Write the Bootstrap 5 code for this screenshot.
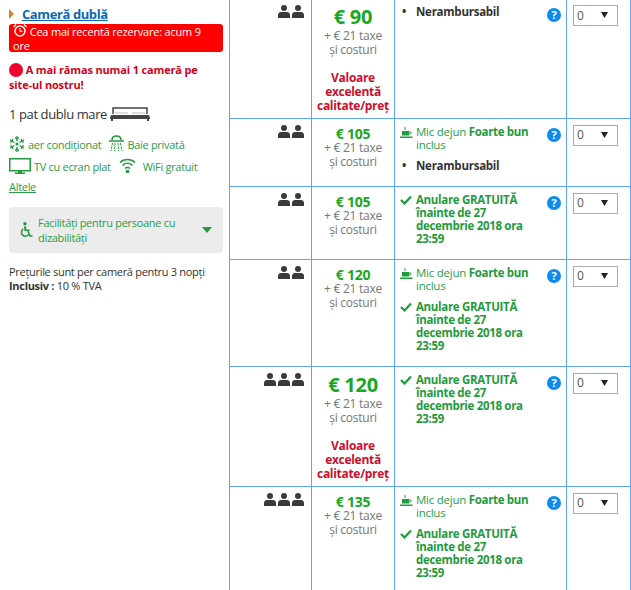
<!DOCTYPE html>
<html lang="ro">
<head>
<meta charset="utf-8">
<title>Camere</title>
<link rel="stylesheet" href="https://cdn.jsdelivr.net/npm/bootstrap@5.3.0/dist/css/bootstrap.min.css">
<style>
html,body{height:590px;overflow:hidden;background:#fff}
body{font-family:"Open Sans","Noto Sans",sans-serif;font-size:11.5px;line-height:14px;color:#333;letter-spacing:-.25px}
.shell{width:631px;height:590px;overflow:hidden}
.side{width:229px;flex:none;padding:6px 6px 0 9px;font-size:11px;letter-spacing:-.3px}
.room-head{font-size:13px;line-height:16px;font-weight:700;height:18px;letter-spacing:-.4px}
.room-head a{color:#0a6ab5;margin-left:5px}
.caret-o{display:inline-block;border-left:5px solid #d9822b;border-top:5px solid transparent;border-bottom:5px solid transparent}
.urgent{background:#f00;color:#fff;border-radius:3px;padding:0 14px 0 4px;width:214px;height:28px;letter-spacing:-.2px}
.urgent svg{vertical-align:-1px}
.left-one{color:#d0021b;font-weight:700;margin-top:10px;letter-spacing:-.15px;line-height:15px}
.dot{display:inline-block;width:14px;height:14px;border-radius:50%;background:#f0002f;vertical-align:-3px}
.bedline{font-size:13px;margin-top:10px;height:24px;display:flex;align-items:center;gap:3px;letter-spacing:-.4px}
.fac{color:#2a9d4a;height:22px;display:flex;align-items:flex-end;gap:3px;white-space:nowrap}
.fac-a{margin-top:4px}
.fac-gap{margin-left:5px}
.more{color:#2a9d4a;display:inline-block;margin-top:6px}
.access{background:#ececec;border-radius:3px;width:214px;height:46px;margin-top:13px;color:#2a9d4a;padding:0 11px}
.access span.lbl{width:150px;line-height:15px}
.tri{border-top:6px solid #1f9a3d;border-left:5px solid transparent;border-right:5px solid transparent}
.note{margin-top:12px}
.offers{width:402px;flex:none;table-layout:fixed;border-collapse:collapse;margin:0}
.offers td{border:1px solid #5fa8f0;border-top:0;padding:0;vertical-align:top;background:transparent;color:#333;box-shadow:none}
.offers tr:last-child td{border-bottom:0}
.c-occ{width:82px;padding:6px 7px 0 0!important}
.occ-row{display:flex;justify-content:flex-end;gap:2px}
.c-price{width:83px;text-align:center}
.c-cond{width:172px;padding:6px 5px 0 5px!important}
.c-qty{padding:6px 0 0 6px!important}
.r1 td{padding-top:5px!important}
.r1 .c-price{padding-top:0!important}
.price{color:#1aa81f;font-weight:700;font-size:14px;line-height:15px;padding-top:7px}
.price-big{font-size:20px;line-height:24px;padding-top:6px}
.r1 .price-big{padding-top:5px}
.fees{color:#777;font-size:12px;letter-spacing:-.25px;line-height:14px}
.value{color:#c8102e;font-weight:700;margin-top:14px;line-height:14px;font-size:12px;letter-spacing:-.3px}
.cond-row{display:flex;justify-content:space-between}
.cond-list{width:134px}
.g-item{display:flex;color:#2a9d4a;line-height:13px}
.g-item .ico{width:16px;flex:none}
.g-item b{font-weight:700;color:#1f9a3d;letter-spacing:-.32px}
.g-item + .g-item{margin-top:8px}
.nonref{display:flex;font-weight:700;color:#333;line-height:13px}
.nonref .ico{width:16px;flex:none;padding-left:2px}
.g-item + .nonref{margin-top:8px}
.help{width:14px;height:14px;border-radius:50%;background:#0d8cf0;color:#fff;font-size:11px;line-height:14px;text-align:center;font-weight:700;margin:3px 0 0 0;flex:none;letter-spacing:0}
.qty{width:45px;height:21px;padding:0 0 0 3px;border:1px solid #aaa;border-radius:0;font-size:12px;color:#555;background-position:right 9px top 6px;background-size:7px 6px;background-image:url("data:image/svg+xml,%3Csvg xmlns='http://www.w3.org/2000/svg' viewBox='0 0 7 6'%3E%3Cpath d='M0 0h7L3.500 6z' fill='%23222'/%3E%3C/svg%3E");font-family:inherit}
tr.r1{height:118px}
tr.r2{height:68px}
tr.r3{height:73px}
tr.r4{height:107px}
tr.r5{height:120px}
tr.r6{height:110px}
</style>
</head>
<body>
<svg width="0" height="0" class="position-absolute">
<defs>
<symbol id="p" viewBox="0 0 12 13"><circle cx="6" cy="3" r="3" fill="#3a3a3a"/><path d="M0 13V10C0 8 1.500 7 3 7h6c1.500 0 3 1 3 3V13z" fill="#3a3a3a"/></symbol>
<symbol id="chk" viewBox="0 0 12 10"><path d="M1 5l3.500 3.500L11 1.500" fill="none" stroke="#1f9a3d" stroke-width="2.200"/></symbol>
<symbol id="cup" viewBox="0 0 13 13"><path d="M2 5h7v4.500H2z" fill="#1f9a3d"/><path d="M9 6h1.500c1 0 1 2-.5 2H9" fill="none" stroke="#1f9a3d"/><path d="M0 10.500h12.500V12H0z" fill="#1f9a3d"/><path d="M5 1c-1 1 1 1.500 0 3" fill="none" stroke="#1f9a3d"/></symbol>
</defs>
</svg>
<div class="shell d-flex">
<div class="side">
  <div class="room-head"><span class="caret-o"></span> <a href="#">Cameră dublă</a></div>
  <div class="urgent"><svg width="14" height="13" viewBox="0 0 14 13"><circle cx="7" cy="7" r="5" fill="none" stroke="#fff" stroke-width="1.500"/><path d="M7 4v3.300h2.500" fill="none" stroke="#fff"/><path d="M0.500 3L3 0.500M13.500 3L11 0.500" stroke="#fff" stroke-width="1.500"/></svg> Cea mai recentă rezervare: acum 9 ore</div>
  <div class="left-one"><span class="dot"></span> A mai rămas numai 1 cameră pe site-ul nostru!</div>
  <div class="bedline">1 pat dublu mare
    <svg width="40" height="14" viewBox="0 0 40 14"><path d="M3 7V1h34v6" fill="none" stroke="#444" stroke-width="1.500"/><path d="M1 8h38l1 3H0z" fill="#444"/><path d="M0 11h40v1H0zM1 12h2v2H1zM37 12h2v2h-2z" fill="#444"/><path d="M5 7h13v-2H5zM22 7h13v-2H22z" fill="#ddd"/></svg>
  </div>
  <div class="fac fac-a">
    <svg width="16" height="16" viewBox="0 0 16 16"><g fill="none" stroke="#1f9a3d" stroke-width="1.300"><path d="M8 0v5M8 11v5M1 4l4.400 2.500M10.600 9.500L15 12M15 4l-4.400 2.500M5.400 9.500L1 12"/><path d="M6 1.500L8 3l2-1.500M6 14.500L8 13l2 1.500M1.200 6.500L3.500 5.300 3.300 2.800M14.800 9.500l-2.300 1.200.2 2.500M14.800 6.500l-2.300-1.200.2-2.500M1.200 9.500l2.300 1.200-.2 2.500"/></g><circle cx="8" cy="8" r="1.600" fill="#1f9a3d"/></svg>
    <span>aer condiționat</span>
    <svg class="fac-gap" width="15" height="17" viewBox="0 0 15 17"><path d="M3 5C3 2 5 1 7.500 1S12 2 12 5" fill="none" stroke="#1f9a3d" stroke-width="1.600"/><path d="M0 6h15" stroke="#1f9a3d" stroke-width="1.500"/><path d="M3.500 8l-1.500 8M6 8l-.5 8M9 8l.5 8M11.500 8l1.500 8" stroke="#1f9a3d" stroke-dasharray="2.500 1"/></svg>
    <span>Baie privată</span>
  </div>
  <div class="fac">
    <svg width="22" height="16" viewBox="0 0 22 16"><rect x=".75" y=".75" width="20.500" height="12" fill="none" stroke="#1f9a3d" stroke-width="1.500"/><path d="M9 13h4v1.500h3V16H6v-1.500h3z" fill="#1f9a3d"/></svg>
    <span>TV cu ecran plat</span>
    <svg class="fac-gap" width="17" height="16" viewBox="0 0 17 16"><path d="M1 4.500c4-4 11-4 15 0M3.500 7.500c3-3 7-3 10 0M6 10.500c1.500-1.500 3.500-1.500 5 0" fill="none" stroke="#1f9a3d" stroke-width="1.500"/><circle cx="8.500" cy="13.500" r="1.800" fill="#1f9a3d"/></svg>
    <span class="ms-1">WiFi gratuit</span>
  </div>
  <a class="more" href="#">Altele</a>
  <div class="access d-flex align-items-center">
    <svg width="14" height="16" viewBox="0 0 14 16"><circle cx="5" cy="1.800" r="1.700" fill="#1f9a3d"/><path d="M4 4.500h2.200v3h3.300v1.500H4.500z" fill="#1f9a3d"/><path d="M3.300 6.800A4 4 0 1 0 9 12" fill="none" stroke="#1f9a3d" stroke-width="1.500"/><path d="M8 9l2 5h2.500" fill="none" stroke="#1f9a3d" stroke-width="1.500"/></svg>
    <span class="lbl flex-grow-1 ms-1">Facilități pentru persoane cu dizabilități</span>
    <span class="tri"></span>
  </div>
  <div class="note">Prețurile sunt per cameră pentru 3 nopți<br><b>Inclusiv :</b> 10 % TVA</div>
</div>
<table class="table offers">
<tbody>
<tr class="r1">
  <td class="c-occ"><div class="occ-row"><svg width="12" height="13"><use href="#p"/></svg><svg width="12" height="13"><use href="#p"/></svg></div></td>
  <td class="c-price"><div class="price price-big">€ 90</div><div class="fees">+ € 21 taxe<br>și costuri</div><div class="value">Valoare excelentă calitate/preț</div></td>
  <td class="c-cond"><div class="cond-row"><div class="cond-list"><div class="nonref"><span class="ico">•</span><span>Nerambursabil</span></div></div><span class="help">?</span></div></td>
  <td class="c-qty"><select class="form-select qty" aria-label="Număr"><option>0</option></select></td>
</tr>
<tr class="r2">
  <td class="c-occ"><div class="occ-row"><svg width="12" height="13"><use href="#p"/></svg><svg width="12" height="13"><use href="#p"/></svg></div></td>
  <td class="c-price"><div class="price">€ 105</div><div class="fees">+ € 21 taxe<br>și costuri</div></td>
  <td class="c-cond"><div class="cond-row"><div class="cond-list"><div class="g-item"><span class="ico"><svg width="13" height="13"><use href="#cup"/></svg></span><span>Mic dejun <b>Foarte bun</b> inclus</span></div><div class="nonref"><span class="ico">•</span><span>Nerambursabil</span></div></div><span class="help">?</span></div></td>
  <td class="c-qty"><select class="form-select qty" aria-label="Număr"><option>0</option></select></td>
</tr>
<tr class="r3">
  <td class="c-occ"><div class="occ-row"><svg width="12" height="13"><use href="#p"/></svg><svg width="12" height="13"><use href="#p"/></svg></div></td>
  <td class="c-price"><div class="price">€ 105</div><div class="fees">+ € 21 taxe<br>și costuri</div></td>
  <td class="c-cond"><div class="cond-row"><div class="cond-list"><div class="g-item"><span class="ico"><svg width="12" height="10"><use href="#chk"/></svg></span><b>Anulare GRATUITĂ înainte de 27 decembrie 2018 ora 23:59</b></div></div><span class="help">?</span></div></td>
  <td class="c-qty"><select class="form-select qty" aria-label="Număr"><option>0</option></select></td>
</tr>
<tr class="r4">
  <td class="c-occ"><div class="occ-row"><svg width="12" height="13"><use href="#p"/></svg><svg width="12" height="13"><use href="#p"/></svg></div></td>
  <td class="c-price"><div class="price">€ 120</div><div class="fees">+ € 21 taxe<br>și costuri</div></td>
  <td class="c-cond"><div class="cond-row"><div class="cond-list"><div class="g-item"><span class="ico"><svg width="13" height="13"><use href="#cup"/></svg></span><span>Mic dejun <b>Foarte bun</b> inclus</span></div><div class="g-item"><span class="ico"><svg width="12" height="10"><use href="#chk"/></svg></span><b>Anulare GRATUITĂ înainte de 27 decembrie 2018 ora 23:59</b></div></div><span class="help">?</span></div></td>
  <td class="c-qty"><select class="form-select qty" aria-label="Număr"><option>0</option></select></td>
</tr>
<tr class="r5">
  <td class="c-occ"><div class="occ-row"><svg width="12" height="13"><use href="#p"/></svg><svg width="12" height="13"><use href="#p"/></svg><svg width="12" height="13"><use href="#p"/></svg></div></td>
  <td class="c-price"><div class="price price-big">€ 120</div><div class="fees">+ € 21 taxe<br>și costuri</div><div class="value">Valoare excelentă calitate/preț</div></td>
  <td class="c-cond"><div class="cond-row"><div class="cond-list"><div class="g-item"><span class="ico"><svg width="12" height="10"><use href="#chk"/></svg></span><b>Anulare GRATUITĂ înainte de 27 decembrie 2018 ora 23:59</b></div></div><span class="help">?</span></div></td>
  <td class="c-qty"><select class="form-select qty" aria-label="Număr"><option>0</option></select></td>
</tr>
<tr class="r6">
  <td class="c-occ"><div class="occ-row"><svg width="12" height="13"><use href="#p"/></svg><svg width="12" height="13"><use href="#p"/></svg><svg width="12" height="13"><use href="#p"/></svg></div></td>
  <td class="c-price"><div class="price">€ 135</div><div class="fees">+ € 21 taxe<br>și costuri</div></td>
  <td class="c-cond"><div class="cond-row"><div class="cond-list"><div class="g-item"><span class="ico"><svg width="13" height="13"><use href="#cup"/></svg></span><span>Mic dejun <b>Foarte bun</b> inclus</span></div><div class="g-item"><span class="ico"><svg width="12" height="10"><use href="#chk"/></svg></span><b>Anulare GRATUITĂ înainte de 27 decembrie 2018 ora 23:59</b></div></div><span class="help">?</span></div></td>
  <td class="c-qty"><select class="form-select qty" aria-label="Număr"><option>0</option></select></td>
</tr>
</tbody>
</table>
</div>
<script src="https://cdn.jsdelivr.net/npm/bootstrap@5.3.0/dist/js/bootstrap.bundle.min.js"></script>
</body>
</html>
